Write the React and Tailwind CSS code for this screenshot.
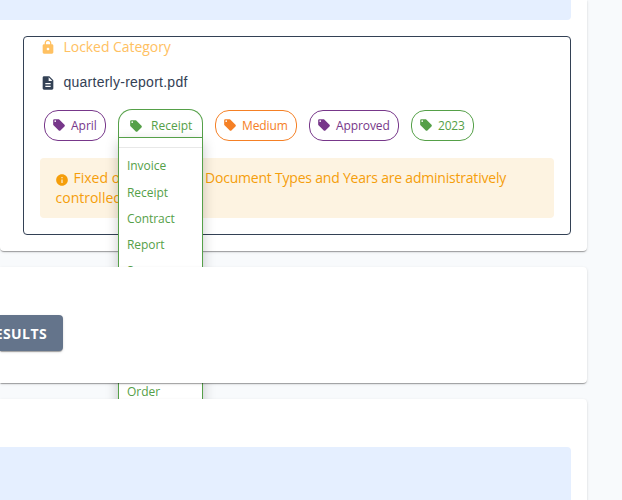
import { MdDescription, MdInfo, MdLocalOffer, MdLock } from "react-icons/md";

const cardShadow =
  "shadow-[0_2px_1px_-1px_rgba(0,0,0,0.2),0_1px_1px_0_rgba(0,0,0,0.14),0_1px_3px_0_rgba(0,0,0,0.12)]";

function Tag({ label, className, textClass }) {
  return (
    <div className={`flex h-[31px] shrink-0 items-center rounded-[14px] border pl-[7px] ${className}`}>
      <MdLocalOffer className="-mt-px size-[14px] shrink-0" />
      <span className={`ml-[5px] whitespace-nowrap text-[12px] leading-4 ${textClass}`}>{label}</span>
    </div>
  );
}

const options = ["Invoice", "Receipt", "Contract", "Report", "Summary"];

function TypeSelect() {
  return (
    <div className="relative -mt-px h-7 w-[85px] shrink-0 rounded-t-[14px] border border-b-0 border-[#55a048] text-[#55a048]">
      <div className="flex h-[31px] items-center pl-[10px]">
        <MdLocalOffer className="size-[14px] shrink-0" />
        <span className="ml-2 text-[12px] leading-4">Receipt</span>
      </div>
      <div className="absolute -left-px top-[27px] h-[290px] w-[85px] border border-[#55a048] bg-white pt-[9px] text-[12px] shadow-[0_5px_12px_rgba(0,0,0,0.22)]">
        <div className="mb-[5.4px] h-px bg-[#e8e8e8]" />
        <ul>
          {options.map((option) => (
            <li key={option} className="h-[26.2px] pl-2 leading-[26px] tracking-[-0.05px]">{option}</li>
          ))}
        </ul>
        <div className="mt-[95px] h-[26px] pl-2 leading-[26px]">
          Order
        </div>
      </div>
    </div>
  );
}

export default function App() {
  return (
    <div className="flex h-[500px] w-[622px] flex-col gap-4 overflow-hidden bg-[#f8fafc] font-['Open_Sans','Noto_Sans',sans-serif]">
      <section className={`h-[251px] w-[587px] shrink-0 rounded-b bg-white pr-4 ${cardShadow}`}>
        <div className="h-5 rounded-br bg-[#e5efff]" />
        <div className="ml-[23px] mt-4 h-[199px] rounded border border-[#334155] pl-4 pr-4">
          <div className="flex h-[20px] items-center text-[#ffc162]">
            <MdLock className="-ml-[0.4px] size-4" />
            <span className="ml-[7.9px] text-[14px] leading-5 tracking-[-0.05px]">Locked Category</span>
          </div>
          <div className="mt-[14px] flex h-[22px] items-center text-[#334155]">
            <MdDescription className="-ml-[0.4px] mt-px size-4" />
            <span className="ml-[7.9px] font-['Liberation_Sans',Arial,sans-serif] text-[14px] leading-5 tracking-[0.25px]">quarterly-report.pdf</span>
          </div>
          <div className="ml-1 mt-[17px] flex h-[31px] gap-3">
            <Tag label="April" className="w-[62px] border-[#77378a] text-[#77378a]" textClass="" />
            <TypeSelect />
            <Tag label="Medium" className="w-[82px] border-[#f58025] text-[#f58025]" textClass="tracking-[-0.1px]" />
            <Tag label="Approved" className="w-[90px] border-[#77378a] text-[#77378a]" textClass="tracking-[-0.1px]" />
            <Tag label="2023" className="w-[63px] border-[#55a048] text-[#55a048]" textClass="tracking-[-0.2px]" />
          </div>
          <div className="mt-[17px] h-[60px] rounded bg-[#fdf3e1] px-[15px] pt-[10px] text-[14px] leading-5 text-[#f59e0b]">
            <div className="flex items-center whitespace-nowrap">
              <MdInfo className="mt-[3px] size-[14px] shrink-0" />
              <span className="ml-[4.5px] w-[131.5px] shrink-0">Fixed options like</span>
              <span className="tracking-[-0.21px]">Document Types and Years are administratively</span>
            </div>
            <div className="pl-[0.5px]">controlled.</div>
          </div>
        </div>
      </section>
      <section className={`relative z-10 h-[116px] w-[587px] shrink-0 rounded-r bg-white pt-12 ${cardShadow}`}>
        <button className={`flex h-9 w-[63px] items-center justify-end rounded-r bg-[#64748b] pr-4 text-[14px] font-bold tracking-[0.4px] text-white ${cardShadow}`}>
          RESULTS
        </button>
      </section>
      <section className={`relative z-10 h-[120px] w-[587px] shrink-0 rounded-tr bg-white pr-4 pt-12 ${cardShadow}`}>
        <div className="h-full rounded-tr bg-[#e5efff]" />
      </section>
    </div>
  );
}
